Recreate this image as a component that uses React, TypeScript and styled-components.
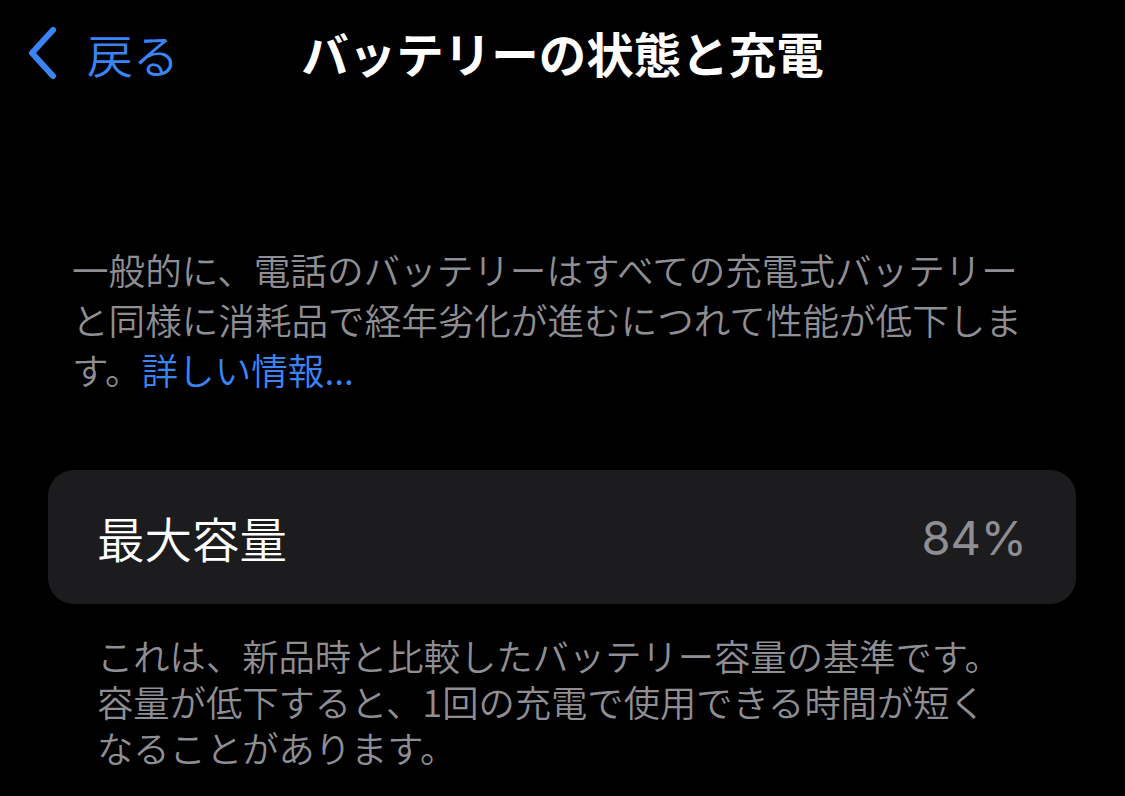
import styled, { createGlobalStyle } from "styled-components";

const GlobalStyle = createGlobalStyle`
  html, body {
    margin: 0;
    padding: 0;
    background: #000;
  }
  body {
    font-family: "Noto Sans CJK JP", "Noto Sans", sans-serif;
    -webkit-font-smoothing: antialiased;
    text-spacing-trim: space-all;
  }
`;

const Screen = styled.div`
  width: 1125px;
  min-height: 796px;
  background: #000;
  color: #fff;
  overflow: hidden;
`;

const NavBar = styled.div`
  display: grid;
  grid-template-columns: 1fr auto 1fr;
  align-items: center;
  height: 106px;
`;

const BackButton = styled.button`
  display: flex;
  align-items: center;
  gap: 30px;
  padding: 0 0 0 27px;
  border: none;
  background: none;
  color: #3a84f5;
  font-family: inherit;
  font-size: 46px;
  font-weight: 350;
  cursor: pointer;
  justify-self: start;
  svg {
    display: block;
  }
`;

const Title = styled.h1`
  margin: 0;
  font-size: 47.5px;
  font-weight: 700;
  line-height: 1;
  letter-spacing: 0;
`;

const Intro = styled.p`
  margin: 139px 0 0 72px;
  width: 965px;
  font-size: 36.6px;
  line-height: 50px;
  font-weight: 350;
  color: #8e8e94;
`;

const MoreLink = styled.a`
  color: #3a84f5;
  text-decoration: none;
`;

const Card = styled.div`
  display: flex;
  align-items: center;
  justify-content: space-between;
  margin: 75px 49px 0 48px;
  height: 134px;
  padding: 0 49px;
  border-radius: 26px;
  background: #1c1c1e;
`;

const Label = styled.span`
  font-size: 47.5px;
  font-weight: 350;
  color: #fff;
`;

const Value = styled.span`
  font-family: Inter, "Noto Sans", sans-serif;
  font-size: 47px;
  color: #8e8e93;
`;

const Footnote = styled.p`
  margin: 28px 0 0 97px;
  width: 916px;
  font-size: 36.3px;
  line-height: 46px;
  font-weight: 350;
  color: #8e8e94;
`;

function BackChevron() {
  return (
    <svg width="30" height="54" viewBox="0 0 30 54" fill="none">
      <path
        d="M26 4 L5 27 L26 50"
        stroke="#3a84f5"
        strokeWidth="6"
        strokeLinecap="round"
        strokeLinejoin="round"
      />
    </svg>
  );
}

export default function App() {
  return (
    <>
      <GlobalStyle />
      <Screen>
        <NavBar>
          <BackButton>
            <BackChevron />
            戻る
          </BackButton>
          <Title>バッテリーの状態と充電</Title>
          <div />
        </NavBar>
        <Intro>
          一般的に、電話のバッテリーはすべての充電式バッテリーと同様に消耗品で経年劣化が進むにつれて性能が低下します。<MoreLink href="#">詳しい情報...</MoreLink>
        </Intro>
        <Card>
          <Label>最大容量</Label>
          <Value>84%</Value>
        </Card>
        <Footnote>
          これは、新品時と比較したバッテリー容量の基準です。容量が低下すると、1回の充電で使用できる時間が短くなることがあります。
        </Footnote>
      </Screen>
    </>
  );
}
